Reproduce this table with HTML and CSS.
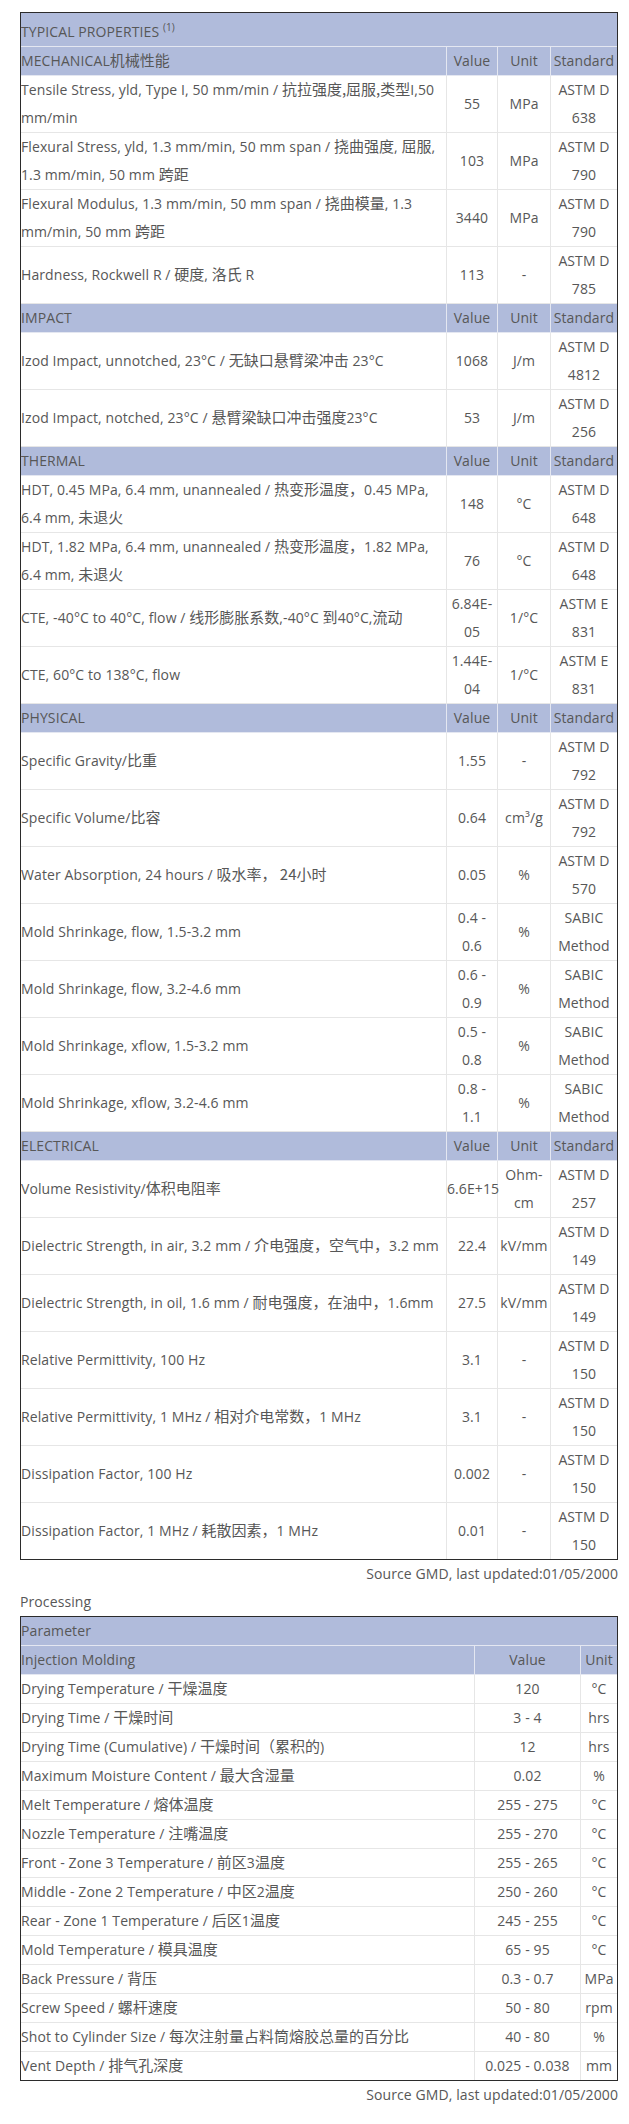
FILE: index.html
```html
<!DOCTYPE html>
<html lang="zh-CN">
<head>
<meta charset="utf-8">
<title>Typical Properties</title>
<link rel="stylesheet" href="styles.css">
</head>
<body>
<div class="page">
  <table class="props">
    <colgroup>
      <col class="c-desc">
      <col class="c-val">
      <col class="c-unit">
      <col class="c-std">
    </colgroup>
    <tr class="top-head"><td colspan="4">TYPICAL PROPERTIES <sup>(1)</sup></td></tr>
    <tr class="head"><td class="desc">MECHANICAL<span class="zh">机械性能</span></td><td>Value</td><td>Unit</td><td>Standard</td></tr>
    <tr><td class="desc">Tensile Stress, yld, Type I, 50 mm/min / <span class="zh">抗拉强度,屈服,类型</span>I,50 mm/min</td><td>55</td><td>MPa</td><td>ASTM D 638</td></tr>
    <tr><td class="desc">Flexural Stress, yld, 1.3 mm/min, 50 mm span / <span class="zh">挠曲强度</span>, <span class="zh">屈服</span>, 1.3 mm/min, 50 mm <span class="zh">跨距</span></td><td>103</td><td>MPa</td><td>ASTM D 790</td></tr>
    <tr><td class="desc">Flexural Modulus, 1.3 mm/min, 50 mm span / <span class="zh">挠曲模量</span>, 1.3 mm/min, 50 mm <span class="zh">跨距</span></td><td>3440</td><td>MPa</td><td>ASTM D 790</td></tr>
    <tr><td class="desc">Hardness, Rockwell R / <span class="zh">硬度</span>, <span class="zh">洛氏</span> R</td><td>113</td><td>-</td><td>ASTM D 785</td></tr>
    <tr class="head"><td class="desc">IMPACT</td><td>Value</td><td>Unit</td><td>Standard</td></tr>
    <tr><td class="desc">Izod Impact, unnotched, 23°C / <span class="zh">无缺口悬臂梁冲击</span> 23°C</td><td>1068</td><td>J/m</td><td>ASTM D 4812</td></tr>
    <tr><td class="desc">Izod Impact, notched, 23°C / <span class="zh">悬臂梁缺口冲击强度</span>23°C</td><td>53</td><td>J/m</td><td>ASTM D 256</td></tr>
    <tr class="head"><td class="desc">THERMAL</td><td>Value</td><td>Unit</td><td>Standard</td></tr>
    <tr><td class="desc">HDT, 0.45 MPa, 6.4 mm, unannealed / <span class="zh">热变形温度，</span>0.45 MPa, 6.4 mm, <span class="zh">未退火</span></td><td>148</td><td>°C</td><td>ASTM D 648</td></tr>
    <tr><td class="desc">HDT, 1.82 MPa, 6.4 mm, unannealed / <span class="zh">热变形温度，</span>1.82 MPa, 6.4 mm, <span class="zh">未退火</span></td><td>76</td><td>°C</td><td>ASTM D 648</td></tr>
    <tr><td class="desc">CTE, -40°C to 40°C, flow / <span class="zh">线形膨胀系数</span>,-40°C <span class="zh">到</span>40°C,<span class="zh">流动</span></td><td>6.84E-05</td><td>1/°C</td><td>ASTM E 831</td></tr>
    <tr><td class="desc">CTE, 60°C to 138°C, flow</td><td>1.44E-04</td><td>1/°C</td><td>ASTM E 831</td></tr>
    <tr class="head"><td class="desc">PHYSICAL</td><td>Value</td><td>Unit</td><td>Standard</td></tr>
    <tr><td class="desc">Specific Gravity/<span class="zh">比重</span></td><td>1.55</td><td>-</td><td>ASTM D 792</td></tr>
    <tr><td class="desc">Specific Volume/<span class="zh">比容</span></td><td>0.64</td><td>cm³/g</td><td>ASTM D 792</td></tr>
    <tr><td class="desc">Water Absorption, 24 hours / <span class="zh">吸水率， 24小时</span></td><td>0.05</td><td>%</td><td>ASTM D 570</td></tr>
    <tr><td class="desc">Mold Shrinkage, flow, 1.5-3.2 mm</td><td>0.4 - 0.6</td><td>%</td><td>SABIC Method</td></tr>
    <tr><td class="desc">Mold Shrinkage, flow, 3.2-4.6 mm</td><td>0.6 - 0.9</td><td>%</td><td>SABIC Method</td></tr>
    <tr><td class="desc">Mold Shrinkage, xflow, 1.5-3.2 mm</td><td>0.5 - 0.8</td><td>%</td><td>SABIC Method</td></tr>
    <tr><td class="desc">Mold Shrinkage, xflow, 3.2-4.6 mm</td><td>0.8 - 1.1</td><td>%</td><td>SABIC Method</td></tr>
    <tr class="head"><td class="desc">ELECTRICAL</td><td>Value</td><td>Unit</td><td>Standard</td></tr>
    <tr><td class="desc">Volume Resistivity/<span class="zh">体积电阻率</span></td><td>6.6E+15</td><td>Ohm-cm</td><td>ASTM D 257</td></tr>
    <tr><td class="desc">Dielectric Strength, in air, 3.2 mm / <span class="zh">介电强度，空气中，</span>3.2 mm</td><td>22.4</td><td>kV/mm</td><td>ASTM D 149</td></tr>
    <tr><td class="desc">Dielectric Strength, in oil, 1.6 mm / <span class="zh">耐电强度，在油中，</span>1.6mm</td><td>27.5</td><td>kV/mm</td><td>ASTM D 149</td></tr>
    <tr><td class="desc">Relative Permittivity, 100 Hz</td><td>3.1</td><td>-</td><td>ASTM D 150</td></tr>
    <tr><td class="desc">Relative Permittivity, 1 MHz / <span class="zh">相对介电常数，</span>1 MHz</td><td>3.1</td><td>-</td><td>ASTM D 150</td></tr>
    <tr><td class="desc">Dissipation Factor, 100 Hz</td><td>0.002</td><td>-</td><td>ASTM D 150</td></tr>
    <tr><td class="desc">Dissipation Factor, 1 MHz / <span class="zh">耗散因素，</span>1 MHz</td><td>0.01</td><td>-</td><td>ASTM D 150</td></tr>
  </table>
  <div class="source">Source GMD, last updated:01/05/2000</div>
  <div class="section-title">Processing</div>
  <table class="proc">
    <colgroup>
      <col class="p-desc">
      <col class="p-val">
      <col class="p-unit">
    </colgroup>
    <tr class="top-head"><td colspan="3">Parameter</td></tr>
    <tr class="head"><td class="desc">Injection Molding</td><td>Value</td><td>Unit</td></tr>
    <tr><td class="desc">Drying Temperature / <span class="zh">干燥温度</span></td><td>120</td><td>°C</td></tr>
    <tr><td class="desc">Drying Time / <span class="zh">干燥时间</span></td><td>3 - 4</td><td>hrs</td></tr>
    <tr><td class="desc">Drying Time (Cumulative) / <span class="zh">干燥时间（累积的</span>)</td><td>12</td><td>hrs</td></tr>
    <tr><td class="desc">Maximum Moisture Content / <span class="zh">最大含湿量</span></td><td>0.02</td><td>%</td></tr>
    <tr><td class="desc">Melt Temperature / <span class="zh">熔体温度</span></td><td>255 - 275</td><td>°C</td></tr>
    <tr><td class="desc">Nozzle Temperature / <span class="zh">注嘴温度</span></td><td>255 - 270</td><td>°C</td></tr>
    <tr><td class="desc">Front - Zone 3 Temperature / <span class="zh">前区</span>3<span class="zh">温度</span></td><td>255 - 265</td><td>°C</td></tr>
    <tr><td class="desc">Middle - Zone 2 Temperature / <span class="zh">中区</span>2<span class="zh">温度</span></td><td>250 - 260</td><td>°C</td></tr>
    <tr><td class="desc">Rear - Zone 1 Temperature / <span class="zh">后区</span>1<span class="zh">温度</span></td><td>245 - 255</td><td>°C</td></tr>
    <tr><td class="desc">Mold Temperature / <span class="zh">模具温度</span></td><td>65 - 95</td><td>°C</td></tr>
    <tr><td class="desc">Back Pressure / <span class="zh">背压</span></td><td>0.3 - 0.7</td><td>MPa</td></tr>
    <tr><td class="desc">Screw Speed / <span class="zh">螺杆速度</span></td><td>50 - 80</td><td>rpm</td></tr>
    <tr><td class="desc">Shot to Cylinder Size / <span class="zh">每次注射量占料筒熔胶总量的百分比</span></td><td>40 - 80</td><td>%</td></tr>
    <tr><td class="desc">Vent Depth / <span class="zh">排气孔深度</span></td><td>0.025 - 0.038</td><td>mm</td></tr>
  </table>
  <div class="source">Source GMD, last updated:01/05/2000</div>
</div>
</body>
</html>
```
FILE: styles.css
```css
html, body {
  margin: 0;
  padding: 0;
  background: #ffffff;
}

body {
  font-family: "Open Sans", "Noto Sans CJK SC", sans-serif;
  font-size: 14px;
  line-height: 28px;
  letter-spacing: 0.1px;
  color: #575757;
}

.page {
  padding: 12px 11px 0 20px;
}

table {
  width: 100%;
  table-layout: fixed;
  border-collapse: separate;
  border-spacing: 0;
  border: 1px solid #2b2b2b;
}

td {
  padding: 0;
  text-align: center;
  vertical-align: middle;
  border-right: 1px solid #e6e6e6;
  border-bottom: 1px solid #e6e6e6;
}

td:last-child {
  border-right: 0;
}

tr:last-child td {
  border-bottom: 0;
}

td.desc {
  text-align: left;
}

.zh {
  font-family: "Noto Sans CJK SC", sans-serif;
  font-size: 15px;
  line-height: 18px;
  letter-spacing: 0;
}

.top-head td,
.head td {
  background: #b0bbdb;
  border-color: #e4e7f1;
}

.top-head td {
  text-align: left;
  padding-top: 5px;
}

.top-head sup {
  font-size: 10px;
  line-height: 0;
}

.c-val { width: 51px; }
.c-unit { width: 53px; }
.c-std { width: 66px; }

.p-val { width: 106px; }
.p-unit { width: 36px; }

.proc .top-head td {
  padding-top: 0;
}

.source {
  text-align: right;
}

.section-title {
  text-align: left;
}
```
